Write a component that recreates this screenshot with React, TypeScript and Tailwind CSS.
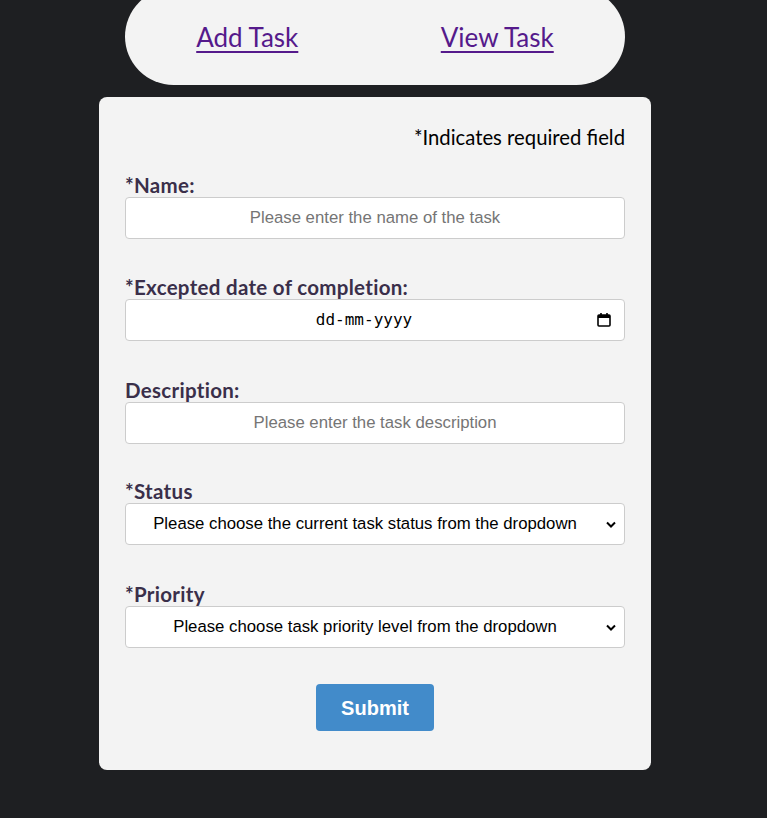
import React from "react";

const labelCls =
  "block pt-[3px] text-[20.5px] leading-[23px] font-bold tracking-[0.3px] text-[#3a2f4a] [font-family:Lato,'Noto_Sans',sans-serif]";
const boxCls =
  "block w-full h-[42px] rounded-[4px] border border-[#cccccc] bg-white text-center text-[16.75px] text-black [font-family:'Liberation_Sans',Arial,sans-serif] outline-none placeholder:text-[#757575]";

function Chevron() {
  return (
    <svg
      className="pointer-events-none absolute right-[8px] top-1/2 -translate-y-1/2"
      width="12"
      height="12"
      viewBox="0 0 12 12"
    >
      <path d="M2 4.5 L6 8.5 L10 4.5" fill="none" stroke="#000" strokeWidth="2" />
    </svg>
  );
}

export default function App() {
  return (
    <div className="min-h-[818px] w-full bg-[#1e1f22] overflow-hidden [font-family:Lato,'Noto_Sans',sans-serif]">
      <div className="w-[750px]">
        <div className="mx-auto w-[500px] -mt-[12px] h-[97px] rounded-full bg-[#f3f3f3] flex items-center justify-around">
          <a href="#" className="text-[26px] leading-none text-[#551a8b] underline decoration-[2px] underline-offset-[4px]">
            Add Task
          </a>
          <a href="#" className="text-[26px] leading-none text-[#551a8b] underline decoration-[2px] underline-offset-[4px]">
            View Task
          </a>
        </div>

        <div className="mx-auto mt-[12px] w-[552px] rounded-[8px] bg-[#f3f3f3] px-[26px] pt-[26px] pb-[39px]">
          <p className="text-right text-[20.3px] leading-[28px] text-black">*Indicates required field</p>

          <div className="mt-[20px]">
            <label className={labelCls}>*Name:</label>
            <input className={boxCls} placeholder="Please enter the name of the task" />
          </div>

          <div className="mt-[34px]">
            <label className={labelCls}>*Excepted date of completion:</label>
            <div className={boxCls + " relative flex items-center justify-center"}>
              <span className="pr-[22px] [font-family:'DejaVu_Sans_Mono',monospace] text-[16px] text-black">
                dd-mm-yyyy
              </span>
              <svg
                className="absolute right-[13px] top-1/2 -translate-y-1/2"
                width="14"
                height="15"
                viewBox="0 0 14 15"
              >
                <rect x="1" y="2.5" width="12" height="11" rx="1" fill="none" stroke="#000" strokeWidth="1.6" />
                <rect x="1" y="2.5" width="12" height="3" fill="#000" />
                <rect x="3.2" y="0.5" width="1.6" height="3" fill="#000" />
                <rect x="9.2" y="0.5" width="1.6" height="3" fill="#000" />
              </svg>
            </div>
          </div>

          <div className="mt-[35px]">
            <label className={labelCls}>Description:</label>
            <input className={boxCls} placeholder="Please enter the task description" />
          </div>

          <div className="mt-[33px]">
            <label className={labelCls}>*Status</label>
            <div className="relative">
              <div className={boxCls + " flex items-center justify-center pr-[20px]"}>
                Please choose the current task status from the dropdown
              </div>
              <Chevron />
            </div>
          </div>

          <div className="mt-[35px]">
            <label className={labelCls}>*Priority</label>
            <div className="relative">
              <div className={boxCls + " flex items-center justify-center pr-[20px]"}>
                Please choose task priority level from the dropdown
              </div>
              <Chevron />
            </div>
          </div>

          <div className="mt-[36px] flex justify-center">
            <button className="w-[118px] h-[47px] rounded-[4px] bg-[#428bca] text-white text-[20px] font-bold [font-family:'Liberation_Sans',Arial,sans-serif]">
              Submit
            </button>
          </div>
        </div>
      </div>
    </div>
  );
}
